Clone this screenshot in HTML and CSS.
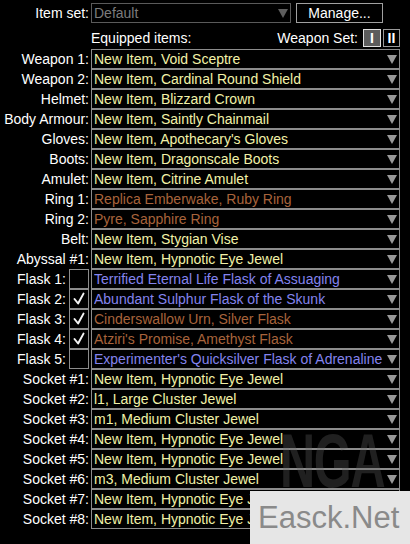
FILE: index.html
```html
<!DOCTYPE html>
<html>
<head>
<meta charset="utf-8">
<link rel="stylesheet" href="styles.css">
</head>
<body>
<div class="panel">
  <div class="top">
    <span class="lbl">Item set:</span>
    <div class="select disabled"><span class="txt">Default</span><svg class="arrow" viewBox="0 0 10 9"><polygon points="0,0 10,0 5,9"/></svg></div>
    <div class="btn">Manage...</div>
  </div>
  <div class="sub">
    <span class="eq">Equipped items:</span>
    <span class="ws">Weapon Set:</span>
    <span class="wbtn on">I</span>
    <span class="wbtn">II</span>
  </div>
  <div class="slots">
    <span class="lbl">Weapon 1:</span><div class="select"><span class="txt rare">New Item, Void Sceptre</span><svg class="arrow" viewBox="0 0 10 9"><polygon points="0,0 10,0 5,9"/></svg></div>
    <span class="lbl">Weapon 2:</span><div class="select"><span class="txt rare">New Item, Cardinal Round Shield</span><svg class="arrow" viewBox="0 0 10 9"><polygon points="0,0 10,0 5,9"/></svg></div>
    <span class="lbl">Helmet:</span><div class="select"><span class="txt rare">New Item, Blizzard Crown</span><svg class="arrow" viewBox="0 0 10 9"><polygon points="0,0 10,0 5,9"/></svg></div>
    <span class="lbl">Body Armour:</span><div class="select"><span class="txt rare">New Item, Saintly Chainmail</span><svg class="arrow" viewBox="0 0 10 9"><polygon points="0,0 10,0 5,9"/></svg></div>
    <span class="lbl">Gloves:</span><div class="select"><span class="txt rare">New Item, Apothecary's Gloves</span><svg class="arrow" viewBox="0 0 10 9"><polygon points="0,0 10,0 5,9"/></svg></div>
    <span class="lbl">Boots:</span><div class="select"><span class="txt rare">New Item, Dragonscale Boots</span><svg class="arrow" viewBox="0 0 10 9"><polygon points="0,0 10,0 5,9"/></svg></div>
    <span class="lbl">Amulet:</span><div class="select"><span class="txt rare">New Item, Citrine Amulet</span><svg class="arrow" viewBox="0 0 10 9"><polygon points="0,0 10,0 5,9"/></svg></div>
    <span class="lbl">Ring 1:</span><div class="select"><span class="txt unique">Replica Emberwake, Ruby Ring</span><svg class="arrow" viewBox="0 0 10 9"><polygon points="0,0 10,0 5,9"/></svg></div>
    <span class="lbl">Ring 2:</span><div class="select"><span class="txt unique">Pyre, Sapphire Ring</span><svg class="arrow" viewBox="0 0 10 9"><polygon points="0,0 10,0 5,9"/></svg></div>
    <span class="lbl">Belt:</span><div class="select"><span class="txt rare">New Item, Stygian Vise</span><svg class="arrow" viewBox="0 0 10 9"><polygon points="0,0 10,0 5,9"/></svg></div>
    <span class="lbl">Abyssal #1:</span><div class="select"><span class="txt rare">New Item, Hypnotic Eye Jewel</span><svg class="arrow" viewBox="0 0 10 9"><polygon points="0,0 10,0 5,9"/></svg></div>
    <span class="lbl">Flask 1:<span class="check"></span></span><div class="select"><span class="txt magic">Terrified Eternal Life Flask of Assuaging</span><svg class="arrow" viewBox="0 0 10 9"><polygon points="0,0 10,0 5,9"/></svg></div>
    <span class="lbl">Flask 2:<span class="check"><svg viewBox="0 0 20 20"><polyline points="5,10 9,15 15,4"/></svg></span></span><div class="select"><span class="txt magic">Abundant Sulphur Flask of the Skunk</span><svg class="arrow" viewBox="0 0 10 9"><polygon points="0,0 10,0 5,9"/></svg></div>
    <span class="lbl">Flask 3:<span class="check"><svg viewBox="0 0 20 20"><polyline points="5,10 9,15 15,4"/></svg></span></span><div class="select"><span class="txt unique">Cinderswallow Urn, Silver Flask</span><svg class="arrow" viewBox="0 0 10 9"><polygon points="0,0 10,0 5,9"/></svg></div>
    <span class="lbl">Flask 4:<span class="check"><svg viewBox="0 0 20 20"><polyline points="5,10 9,15 15,4"/></svg></span></span><div class="select"><span class="txt unique">Atziri's Promise, Amethyst Flask</span><svg class="arrow" viewBox="0 0 10 9"><polygon points="0,0 10,0 5,9"/></svg></div>
    <span class="lbl">Flask 5:<span class="check"></span></span><div class="select"><span class="txt magic">Experimenter's Quicksilver Flask of Adrenaline</span><svg class="arrow" viewBox="0 0 10 9"><polygon points="0,0 10,0 5,9"/></svg></div>
    <span class="lbl">Socket #1:</span><div class="select"><span class="txt rare">New Item, Hypnotic Eye Jewel</span><svg class="arrow" viewBox="0 0 10 9"><polygon points="0,0 10,0 5,9"/></svg></div>
    <span class="lbl">Socket #2:</span><div class="select"><span class="txt rare">l1, Large Cluster Jewel</span><svg class="arrow" viewBox="0 0 10 9"><polygon points="0,0 10,0 5,9"/></svg></div>
    <span class="lbl">Socket #3:</span><div class="select"><span class="txt rare">m1, Medium Cluster Jewel</span><svg class="arrow" viewBox="0 0 10 9"><polygon points="0,0 10,0 5,9"/></svg></div>
    <span class="lbl">Socket #4:</span><div class="select"><span class="txt rare">New Item, Hypnotic Eye Jewel</span><svg class="arrow" viewBox="0 0 10 9"><polygon points="0,0 10,0 5,9"/></svg></div>
    <span class="lbl">Socket #5:</span><div class="select"><span class="txt rare">New Item, Hypnotic Eye Jewel</span><svg class="arrow" viewBox="0 0 10 9"><polygon points="0,0 10,0 5,9"/></svg></div>
    <span class="lbl">Socket #6:</span><div class="select"><span class="txt rare">m3, Medium Cluster Jewel</span><svg class="arrow" viewBox="0 0 10 9"><polygon points="0,0 10,0 5,9"/></svg></div>
    <span class="lbl">Socket #7:</span><div class="select"><span class="txt rare">New Item, Hypnotic Eye Jewel</span><svg class="arrow" viewBox="0 0 10 9"><polygon points="0,0 10,0 5,9"/></svg></div>
    <span class="lbl">Socket #8:</span><div class="select"><span class="txt rare">New Item, Hypnotic Eye Jewel</span><svg class="arrow" viewBox="0 0 10 9"><polygon points="0,0 10,0 5,9"/></svg></div>
  </div>
</div>
<div class="wm-nga">NGA</div>
<div class="wm-box">Easck.Net</div>
</body>
</html>
```
FILE: styles.css
```css
html, body {
  margin: 0;
  padding: 0;
  background: #000;
}
body {
  width: 410px;
  height: 544px;
  overflow: hidden;
  position: relative;
  font-family: "Liberation Sans", Arial, sans-serif;
  font-size: 14px;
  color: #fff;
}
.panel {
  padding-top: 3px;
}
.top {
  display: grid;
  grid-template-columns: 89px 200px 90px;
  column-gap: 2px;
  height: 20px;
}
.top .btn {
  margin-left: 3px;
}
.lbl {
  display: flex;
  justify-content: flex-end;
  align-items: center;
  gap: 3px;
  line-height: 20px;
  height: 20px;
  white-space: nowrap;
}
.select {
  box-sizing: border-box;
  height: 20px;
  border: 1px solid #8c8c8c;
  background: #000;
  display: flex;
  align-items: center;
  padding: 0 2px;
  overflow: hidden;
}
.select.disabled {
  border-color: #5a5a5a;
}
.select.disabled .txt {
  color: #7c7c7c;
}
.select.disabled .arrow {
  fill: #5e5e5e;
}
.txt {
  flex: 1;
  min-width: 0;
  white-space: nowrap;
  overflow: hidden;
  line-height: 18px;
}
.arrow {
  width: 10px;
  height: 9px;
  flex: none;
  fill: #9a9a9a;
}
.rare { color: #f2f2a8; }
.unique { color: #a8643c; }
.magic { color: #8484ee; }
.btn {
  box-sizing: border-box;
  height: 20px;
  border: 1px solid #a0a0a0;
  background: #000;
  display: flex;
  align-items: center;
  justify-content: center;
  line-height: 18px;
}
.sub {
  display: flex;
  align-items: center;
  height: 18px;
  margin-top: 6px;
  padding-left: 91px;
  width: 309px;
  margin-bottom: 2px;
}
.eq {
  flex: 1;
  line-height: 18px;
}
.ws {
  margin-right: 5px;
  line-height: 18px;
}
.wbtn {
  box-sizing: border-box;
  height: 18px;
  width: 18px;
  border: 1px solid #9a9a9a;
  background: #000;
  display: flex;
  align-items: center;
  justify-content: center;
  font-weight: bold;
  line-height: 16px;
}
.wbtn + .wbtn {
  margin-left: 2px;
  width: 17px;
}
.wbtn.on {
  background: #5c5c5c;
  border-color: #e0e0e0;
}
.slots {
  display: grid;
  grid-template-columns: 89px 309px;
  column-gap: 2px;
  grid-auto-rows: 20px;
}
.check {
  box-sizing: border-box;
  width: 20px;
  height: 20px;
  border: 1px solid #8c8c8c;
  background: #000;
  display: flex;
  align-items: center;
  justify-content: center;
}
.check svg {
  width: 18px;
  height: 18px;
  fill: none;
  stroke: #f4f4f4;
  stroke-width: 2.2;
  stroke-linecap: round;
  stroke-linejoin: round;
}
.wm-nga {
  position: absolute;
  left: 280px;
  top: 423px;
  font-family: "Liberation Sans", Arial, sans-serif;
  font-weight: bold;
  font-size: 76px;
  line-height: 76px;
  letter-spacing: -2px;
  color: rgba(100, 100, 100, 0.32);
  transform: scaleX(0.64);
  transform-origin: left top;
  pointer-events: none;
}
.wm-box {
  position: absolute;
  left: 250px;
  top: 491px;
  width: 160px;
  height: 53px;
  box-sizing: border-box;
  padding-left: 8px;
  background: #e6e6e6;
  color: #8a8a8a;
  font-family: "Liberation Sans", Arial, sans-serif;
  font-size: 31px;
  line-height: 53px;
  white-space: nowrap;
  overflow: hidden;
}
```
